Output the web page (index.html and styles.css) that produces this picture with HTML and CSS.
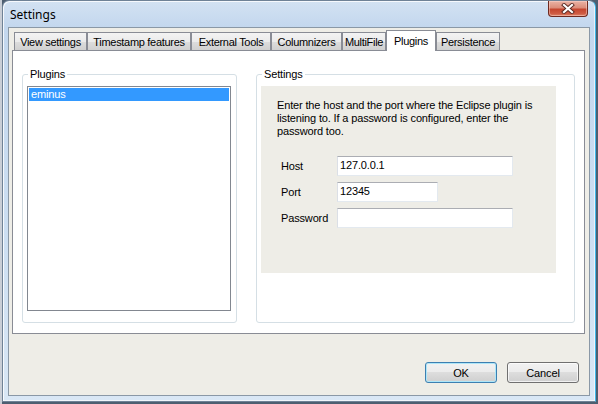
FILE: index.html
```html
<!DOCTYPE html>
<html>
<head>
<meta charset="utf-8">
<link rel="stylesheet" href="styles.css">
</head>
<body>
<div class="window">
  <div class="titlebar">
    <span class="title">Settings</span>
    <button class="close" aria-label="Close">
      <svg width="14" height="11" viewBox="0 0 14 11">
        <path d="M3 2 L11 9 M11 2 L3 9" stroke="#5a2a22" stroke-width="4" stroke-linecap="square"/>
        <path d="M3 2 L11 9 M11 2 L3 9" stroke="#ffffff" stroke-width="2.2" stroke-linecap="square"/>
      </svg>
    </button>
  </div>
  <div class="client">
    <div class="tabcontrol">
      <div class="tabstrip">
        <div class="tab t-view">View settings</div>
        <div class="tab t-time">Timestamp features</div>
        <div class="tab t-ext">External Tools</div>
        <div class="tab t-col">Columnizers</div>
        <div class="tab t-multi">MultiFile</div>
        <div class="tab tab-active t-plug">Plugins</div>
        <div class="tab t-pers">Persistence</div>
      </div>
      <div class="tabpage">
        <fieldset class="group group-plugins">
          <legend>Plugins</legend>
          <div class="listbox">
            <div class="item item-selected">eminus</div>
          </div>
        </fieldset>
        <fieldset class="group group-settings">
          <legend>Settings</legend>
          <div class="config">
            <p class="hint">Enter the host and the port where the Eclipse plugin is<br>listening to. If a password is configured, enter the<br>password too.</p>
            <div class="form">
              <label class="lbl">Host</label>
              <div class="field field-wide">127.0.0.1</div>
              <label class="lbl">Port</label>
              <div class="field field-short">12345</div>
              <label class="lbl">Password</label>
              <div class="field field-wide"></div>
            </div>
          </div>
        </fieldset>
      </div>
    </div>
    <div class="buttons">
      <button class="btn btn-default">OK</button>
      <button class="btn">Cancel</button>
    </div>
  </div>
</div>
</body>
</html>
```
FILE: styles.css
```css
* { box-sizing: border-box; }
html, body {
  margin: 0;
  padding: 0;
}
body {
  width: 598px;
  height: 404px;
  overflow: hidden;
  background: linear-gradient(90deg, #c9ced6 0, #c9ced6 2px, #4d5e70 2px);
  font-family: "Liberation Sans", Arial, sans-serif;
  font-size: 11px;
  letter-spacing: -0.15px;
  color: #000;
}
.window {
  width: 594px;
  height: 402px;
  margin-left: 2px;
  border: 1px solid #6f8296;
  border-right-color: #3fb7ea;
  border-radius: 7px 7px 0 0;
  padding: 0 5px 5px 5px;
  display: flex;
  flex-direction: column;
  background:
    linear-gradient(180deg, #d3e2f2 0, #c3d7ee 26px, #cddff2 60%, #d9e7f5 100%);
  box-shadow: inset 1px 1px 0 rgba(255,255,255,0.8), inset -1px -1px 0 rgba(255,255,255,0.6);
}
.titlebar {
  height: 26px;
  display: flex;
  align-items: flex-start;
  justify-content: space-between;
  padding-left: 2px;
  padding-right: 2px;
}
.title {
  font-family: "Noto Sans", "Open Sans", sans-serif;
  font-size: 12px;
  letter-spacing: 0;
  line-height: 16px;
  margin-top: 6px;
  color: #000;
}
.close {
  width: 40px;
  height: 16px;
  margin-top: 0;
  padding: 0;
  border: 1px solid #6e2a20;
  border-top: none;
  border-radius: 0 0 4px 4px;
  background: linear-gradient(180deg, #eab3a5 0, #dc8d7a 45%, #c5462f 55%, #cf5d44 85%, #e08a6f 100%);
  box-shadow: inset 0 0 0 1px rgba(255,220,210,0.45);
  display: flex;
  align-items: center;
  justify-content: center;
}
.close svg { display: block; }
.client {
  flex: 1;
  border: 1px solid #8a98a6;
  background: #eeede7;
  display: flex;
  flex-direction: column;
}
.tabcontrol {
  margin: 2px 4px 0 3px;
  display: flex;
  flex-direction: column;
}
.tabstrip {
  height: 20px;
  display: flex;
  align-items: flex-end;
  padding-left: 2px;
  position: relative;
  z-index: 1;
}
.tab {
  height: 18px;
  border: 1px solid #898c95;
  border-bottom: none;
  background: linear-gradient(180deg, #f3f3f3 0, #ebebeb 50%, #dddddd 50%, #d0d0d0 100%);
  text-align: center;
  line-height: 17px;
  padding-top: 1px;
  white-space: nowrap;
  letter-spacing: -0.3px;
}
.tab-active {
  height: 21px;
  margin-bottom: -1px;
  background: #ffffff;
  line-height: 17px;
  padding-top: 2px;
}
.t-view { width: 73px; }
.t-time { width: 104px; }
.t-ext { width: 80px; }
.t-col { width: 71px; }
.t-multi { width: 44px; }
.t-plug { width: 50px; }
.t-pers { width: 64px; }
.tabpage {
  height: 284px;
  border: 1px solid #898c95;
  background: #ffffff;
  display: flex;
  align-items: flex-start;
  padding: 17px 0 0 9px;
  gap: 19px;
}
.group {
  margin: 0;
  min-width: 0;
  height: 255px;
  border: 1px solid #d5dfe5;
  border-radius: 3px;
}
.group legend {
  padding: 0 2px;
  margin-left: 1px;
  line-height: 13px;
  font-size: 11px;
}
.group-plugins {
  width: 215px;
  padding: 5px 5px 0 4px;
}
.group-settings {
  width: 319px;
  padding: 5px 0 0 4px;
}
.listbox {
  height: 225px;
  border: 1px solid #828790;
  padding: 1px;
  background: #fff;
}
.item {
  height: 13px;
  line-height: 13px;
  padding-left: 2px;
}
.item-selected {
  background: #3399ff;
  color: #ffffff;
}
.config {
  width: 295px;
  height: 187px;
  background: #eeede7;
  padding: 13px 0 0 16px;
}
.hint {
  margin: 0;
  line-height: 13px;
  white-space: nowrap;
}
.form {
  margin-top: 18px;
  margin-left: 4px;
  display: grid;
  grid-template-columns: 56px auto;
  grid-auto-rows: 20px;
  row-gap: 6px;
  align-items: center;
  justify-items: start;
}
.lbl {
  line-height: 13px;
}
.field {
  height: 20px;
  border: 1px solid #e3e9ef;
  border-top-color: #abadb3;
  border-left-color: #dbdfe6;
  background: #ffffff;
  padding: 0 0 0 2px;
  line-height: 17px;
}
.field-wide { width: 176px; }
.field-short { width: 101px; }
.buttons {
  margin-top: auto;
  margin-bottom: 12px;
  margin-right: 10px;
  display: flex;
  justify-content: flex-end;
  gap: 10px;
}
.btn {
  width: 72px;
  height: 21px;
  padding: 0;
  font-family: "Liberation Sans", Arial, sans-serif;
  font-size: 11px;
  letter-spacing: -0.15px;
  color: #000;
  border: 1px solid #707070;
  border-radius: 3px;
  background: linear-gradient(180deg, #f2f2f2 0, #ebebeb 50%, #dddddd 50%, #cfcfcf 100%);
  box-shadow: inset 0 0 0 1px rgba(255,255,255,0.7);
}
.btn-default {
  border-color: #3c7fb1;
  box-shadow: inset 0 0 0 1px #aee6f8;
}
```
